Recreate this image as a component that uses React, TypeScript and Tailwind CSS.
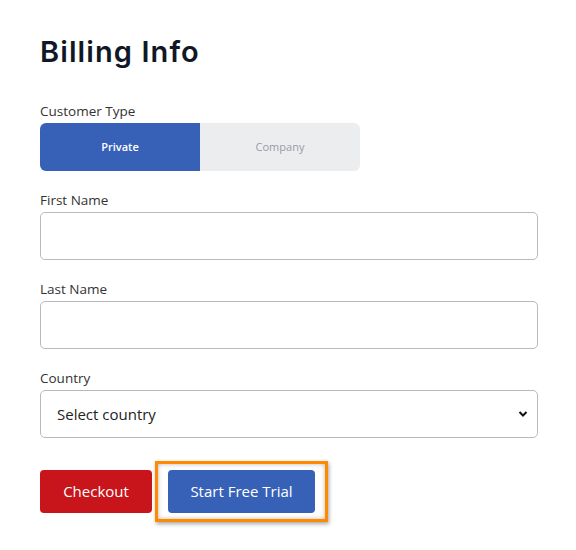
import React from "react";

export default function App() {
  return (
    <div className="min-h-[550px] w-[576px] bg-white" style={{ fontFamily: '"Open Sans", sans-serif' }}>
      <div className="px-10 pt-[34px]">
        <h1 className="text-[29px] leading-[36px] font-semibold text-[#101828] tracking-[1.1px]" style={{ fontFamily: 'Inter, sans-serif' }}>
          Billing Info
        </h1>

        <div className="mt-[32px] text-[13.5px] leading-[18px] text-[#333]">Customer Type</div>
        <div className="mt-[3px] flex w-[320px] h-[48px] rounded-[6px] overflow-hidden">
          <button className="w-[160px] bg-[#3761b7] text-white text-[11px] font-semibold">Private</button>
          <button className="w-[160px] bg-[#ecedef] text-[#9a9aa6] text-[11px]">Company</button>
        </div>

        <div className="mt-[20px] text-[13.5px] leading-[18px] text-[#333]">First Name</div>
        <input className="mt-[3px] block w-[498px] h-[48px] rounded-[5px] border border-[#b9b9c1] bg-white" />

        <div className="mt-[20px] text-[13.5px] leading-[18px] text-[#333]">Last Name</div>
        <input className="mt-[3px] block w-[498px] h-[48px] rounded-[5px] border border-[#b9b9c1] bg-white" />

        <div className="mt-[20px] text-[13.5px] leading-[18px] text-[#333]">Country</div>
        <div className="mt-[3px] relative w-[498px] h-[48px] rounded-[5px] border border-[#b9b9c1] bg-white flex items-center pl-[16px]">
          <span className="text-[15px] text-[#222]">Select country</span>
          <svg className="absolute right-[9px] top-[19px]" width="10" height="8" viewBox="0 0 10 8">
            <path d="M1.5 2 L5 5.5 L8.5 2" fill="none" stroke="#111" strokeWidth="2" />
          </svg>
        </div>

        <div className="mt-[23px] flex items-center gap-[3px]">
          <button className="h-[43px] w-[112px] rounded-[4px] bg-[#c8141b] text-white text-[15px]">Checkout</button>
          <div className="border-[3px] border-[#ff8a00] px-[10px] py-[6px] shadow-[1px_2px_4px_rgba(0,0,0,0.35),inset_0_0_4px_rgba(0,0,0,0.3)]">
            <button className="h-[43px] w-[147px] rounded-[4px] bg-[#3761b7] text-white text-[15px] block">Start Free Trial</button>
          </div>
        </div>
      </div>
    </div>
  );
}
